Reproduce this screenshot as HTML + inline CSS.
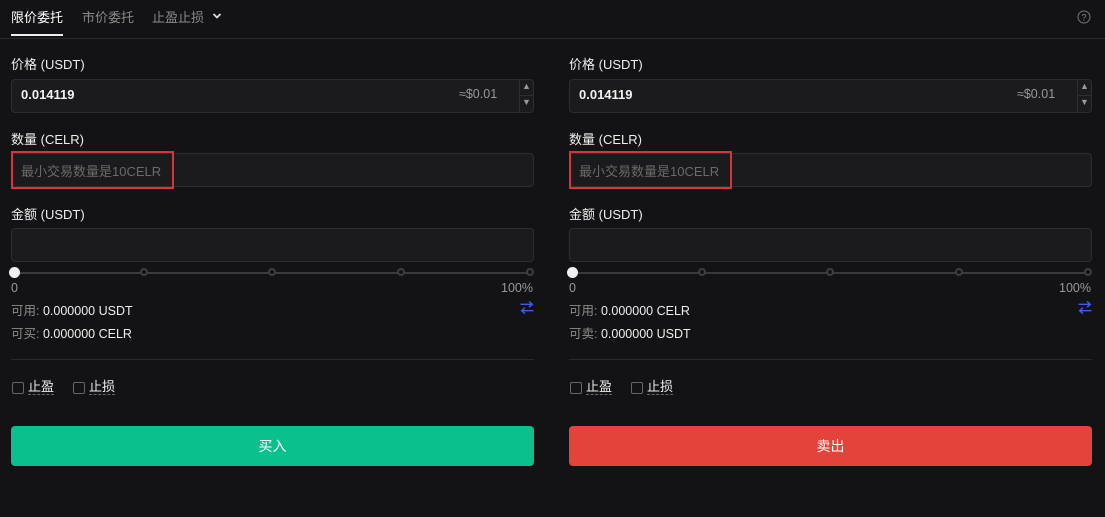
<!DOCTYPE html>
<html><head><meta charset="utf-8"><style>
*{box-sizing:border-box;margin:0;padding:0}
body{width:1105px;height:517px;background:#131315;font-family:"Liberation Sans","Noto Sans CJK SC",sans-serif;color:#e8e8e8;position:relative;overflow:hidden;font-size:13px}
.abs{position:absolute}
.tab{top:7px;font-size:13px;color:#8a8a8a}
.lbl{font-size:13px;color:#eee}
.inp{background:#1b1b1d;border:1px solid #2e2e31;border-radius:4px;height:34px}
.val{font-size:13px;font-weight:bold;color:#f2f2f2}
.ph{font-size:13px;color:#6a6a6a}
.red{border:2px solid #d8343a;height:38px}
.track{height:2px;background:#3a3a3d}
.dot{width:8px;height:8px;border-radius:50%;border:2px solid #3e3e42;background:#131315}
.knob{width:11px;height:11px;border-radius:50%;background:#f0f0f0}
.small{font-size:12.5px;color:#bbb}
.gray{color:#8c8c8c}
.cb{width:12px;height:12px;border:1px solid #666;border-radius:2px}
.ck{font-size:13px;color:#eee;border-bottom:1px dashed #666;line-height:15px}
.btn{height:40px;border-radius:4px;text-align:center;line-height:40px;color:#fff;font-size:14px}
</style></head><body>
<div class="abs tab" style="left:11px;color:#fff">限价委托</div>
<div class="abs" style="left:11px;top:34px;width:52px;height:2px;background:#eee"></div>
<div class="abs tab" style="left:82px">市价委托</div>
<div class="abs tab" style="left:152px">止盈止损</div>
<svg class="abs" style="left:212px;top:12px" width="10" height="8" viewBox="0 0 10 8"><path d="M1.5 2 L5 5.5 L8.5 2" stroke="#ddd" stroke-width="1.8" fill="none"/></svg>
<svg class="abs" style="left:1077px;top:10px" width="14" height="14" viewBox="0 0 14 14"><circle cx="7" cy="7" r="6" stroke="#777" fill="none"/><text x="7" y="10.5" font-size="9" fill="#888" text-anchor="middle" font-family="Liberation Sans">?</text></svg>
<div class="abs" style="left:0;top:38px;width:1105px;height:1px;background:#2a2a2d"></div>

<div id="L"></div>
<script>
function col(x,buy){
 const w=523;
 const a=buy?'USDT':'CELR', b=buy?'CELR':'USDT';
 let h=`
<div class="abs lbl" style="left:${x}px;top:54px">价格 (USDT)</div>
<div class="abs inp" style="left:${x}px;top:79px;width:${w}px"></div>
<div class="abs val" style="left:${x+10}px;top:87px">0.014119</div>
<div class="abs" style="left:${x+448}px;top:87px;color:#999;font-size:12.5px">≈$0.01</div>
<div class="abs" style="left:${x+508}px;top:80px;width:1px;height:32px;background:#2e2e31"></div>
<div class="abs" style="left:${x+508}px;top:95px;width:15px;height:1px;background:#2e2e31"></div>
<div class="abs" style="left:${x+511}px;top:81px;font-size:9px;color:#999">▲</div>
<div class="abs" style="left:${x+511}px;top:97px;font-size:9px;color:#999">▼</div>
<div class="abs lbl" style="left:${x}px;top:129px">数量 (CELR)</div>
<div class="abs inp" style="left:${x}px;top:153px;width:${w}px"></div>
<div class="abs red" style="left:${x}px;top:151px;width:163px"></div>
<div class="abs ph" style="left:${x+10}px;top:161px">最小交易数量是10CELR</div>
<div class="abs lbl" style="left:${x}px;top:204px">金额 (USDT)</div>
<div class="abs inp" style="left:${x}px;top:228px;width:${w}px"></div>
<div class="abs track" style="left:${x+4}px;top:272px;width:${w-8}px"></div>`;
 for(let i=1;i<5;i++) h+=`<div class="abs dot" style="left:${x+4+i*128.7-4}px;top:268px"></div>`;
 h+=`<div class="abs knob" style="left:${x-2}px;top:267px"></div>
<div class="abs small" style="left:${x}px;top:281px;color:#999">0</div>
<div class="abs small" style="left:${x+490}px;top:281px;color:#999">100%</div>
<div class="abs small" style="left:${x}px;top:300px"><span class="gray">可用:</span> <span style="color:#eee">0.000000 ${a}</span></div>
<div class="abs" style="left:${x+509}px;top:298px;color:#3d5ee8;font-size:14px;font-weight:bold">⇄</div>
<div class="abs small" style="left:${x}px;top:323px"><span class="gray">${buy?'可买':'可卖'}:</span> <span style="color:#eee">0.000000 ${b}</span></div>
<div class="abs" style="left:${x}px;top:359px;width:${w}px;height:1px;background:#2a2a2d"></div>
<div class="abs cb" style="left:${x+1}px;top:382px"></div>
<div class="abs ck" style="left:${x+17}px;top:379px">止盈</div>
<div class="abs cb" style="left:${x+62}px;top:382px"></div>
<div class="abs ck" style="left:${x+78}px;top:379px">止损</div>
<div class="abs btn" style="left:${x}px;top:426px;width:${w}px;background:${buy?'#0ac18e':'#e4433b'}">${buy?'买入':'卖出'}</div>`;
 return h;
}
document.getElementById('L').innerHTML=col(11,true)+col(569,false);
</script>
</body></html>
